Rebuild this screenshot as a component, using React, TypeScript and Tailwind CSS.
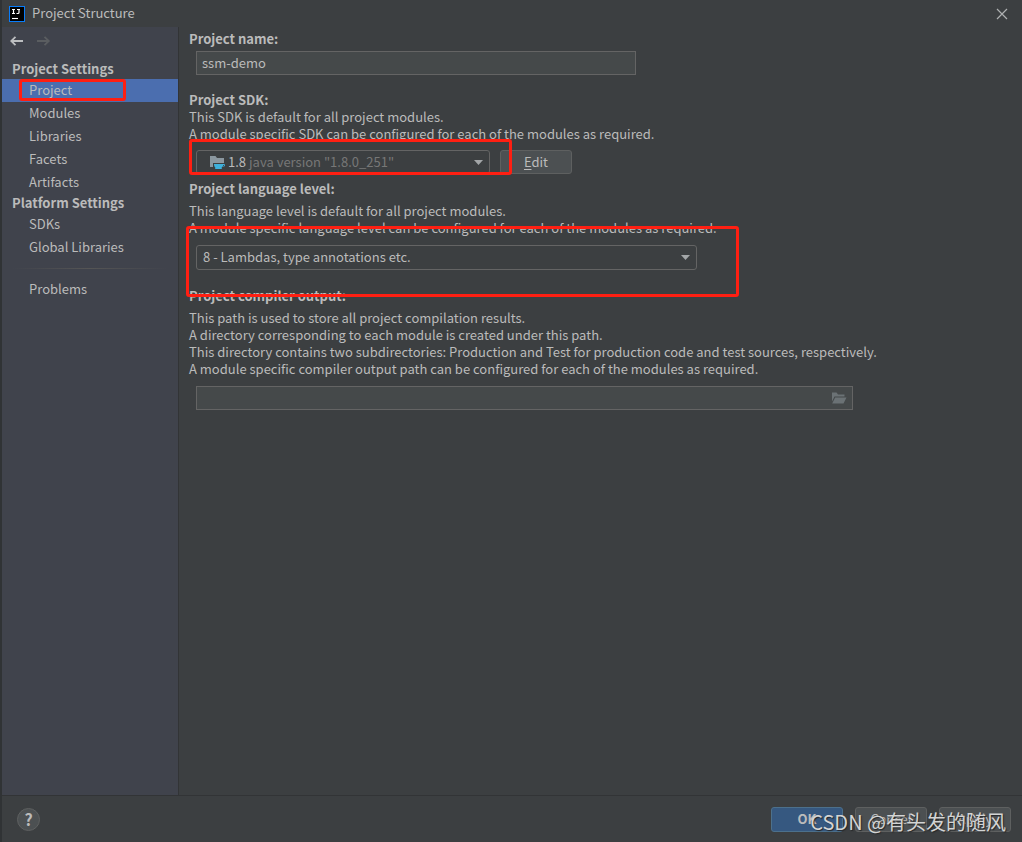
import { ReactNode, useState } from "react";

const settingsGroups = [
  { title: "Project Settings", items: ["Project", "Modules", "Libraries", "Facets", "Artifacts"] },
  { title: "Platform Settings", items: ["SDKs", "Global Libraries"] },
];

function Logo() {
  return (
    <svg width="16" height="16" viewBox="0 0 16 16" aria-hidden="true">
      <rect width="16" height="16" fill="#087cfa" />
      <rect x="1" y="1" width="14" height="14" fill="#000" />
      <path d="M3 3.500h3M4.500 3.500v4M3 7.500h3M8 3.500h3M10 3.500v3q0 1-1 1h-1.500" fill="none" stroke="#fff" strokeWidth="1.200" />
      <path d="M3 12.500h6" stroke="#fff" strokeWidth="1.100" />
    </svg>
  );
}

function Arrow({ back = false }: { back?: boolean }) {
  return (
    <svg width="14" height="10" viewBox="0 0 14 10" fill="none" stroke="currentColor" strokeWidth="1.800" aria-hidden="true">
      {back ? <path d="M13 5H1M5.500 .8L1.200 5l4.300 4.200" /> : <path d="M0 5h12M7.500 .8L11.800 5 7.500 9.200" />}
    </svg>
  );
}

function Caret() {
  return (
    <svg width="10" height="6" viewBox="0 0 10 6" className="pointer-events-none absolute right-1.5 top-[10px]" aria-hidden="true">
      <path d="M0 0h9L4.500 5z" fill="#a3a6a8" />
    </svg>
  );
}

function JdkIcon() {
  return (
    <svg width="16" height="16" viewBox="0 0 16 16" aria-hidden="true">
      <path d="M1 2h5.500l1.500 2h7v5H4v4H1z" fill="#8b979f" />
      <path d="M5 10h9.500c1 0 1.500.500 1.500 1.300s-.6 1.300-1.600 1.300h-.9c-.3.700-.8 1.200-1.500 1.600h1v.8H6v-.8h1C5.600 13.300 5 12 5 10zm9 1v.9c.8 0 1.200-.2 1.200-.5S14.800 11 14 11z" fill="#3fb1dc" />
    </svg>
  );
}

function FolderIcon() {
  return (
    <svg width="16" height="12" viewBox="0 0 16 12" aria-hidden="true">
      <path d="M1 .5h4.500l1.500 2h6.500v2H3.500L1 9.500z" fill="#6b7275" />
      <path d="M4.200 5.500H15.500L12.500 11.500H1.200z" fill="#6b7275" />
    </svg>
  );
}

function NavItem({ label, active, onSelect }: { label: string; active: boolean; onSelect: () => void }) {
  return (
    <button
      type="button"
      onClick={onSelect}
      aria-current={active ? "page" : undefined}
      className={`relative block h-[23px] w-full pb-0.5 pl-[27px] text-left outline-none ${active ? "bg-[#4b6eaf]" : ""}`}
    >
      {label}
      {label === "Project" && (
        <span className="pointer-events-none absolute left-[17px] top-0 h-[22px] w-[107px] rounded-[3px] border-[3px] border-[#ff1f12]" />
      )}
    </button>
  );
}

function Heading({ children, htmlFor }: { children: ReactNode; htmlFor: string }) {
  return (
    <label htmlFor={htmlFor} className="block font-bold">
      {children}
    </label>
  );
}

export default function App() {
  const [page, setPage] = useState("Project");
  const dialogButton = "h-[25px] w-[72px] rounded-[3px] border border-[#5e6060] bg-[#4c5052] pb-0.5";

  return (
    <div className="relative flex min-h-screen flex-col border-l-2 border-[#303335] bg-[#3c3f41] font-['Noto_Sans_CJK_SC',sans-serif] text-[13px] leading-[17px] text-[#bbbbbb]">
      <header className="flex h-[27px] items-center pl-[7px] pr-[14px]">
        <Logo />
        <h1 className="ml-[7px] flex-1 pb-0.5">Project Structure</h1>
        <button type="button" aria-label="Close">
          <svg width="12" height="12" viewBox="0 0 12 12" stroke="#aeb0b1" strokeWidth="1.200" aria-hidden="true">
            <path d="M1 1l10 10M11 1L1 11" />
          </svg>
        </button>
      </header>

      <div className="flex flex-1">
        <nav className="w-[177px] shrink-0 border-r border-[#323436] bg-[#40434c]">
          <div className="flex h-[33px] items-start gap-[13px] pl-2 pt-[9px]">
            <button type="button" aria-label="Back" className="text-[#bcbec0]">
              <Arrow back />
            </button>
            <button type="button" aria-label="Forward" disabled className="text-[#5a5d60]">
              <Arrow />
            </button>
          </div>
          {settingsGroups.map((group) => (
            <section key={group.title}>
              <h2 className="h-[19px] pl-2.5 font-bold">{group.title}</h2>
              {group.items.map((item) => (
                <NavItem key={item} label={item} active={page === item} onSelect={() => setPage(item)} />
              ))}
            </section>
          ))}
          <hr className="mx-2.5 my-[9px] h-px border-0 bg-linear-to-r from-transparent via-[#555555] to-transparent" />
          <NavItem label="Problems" active={page === "Problems"} onSelect={() => setPage("Problems")} />
        </nav>

        <main className="min-w-0 flex-1 pl-2.5 pr-4 pt-[3px]">
          <section>
            <Heading htmlFor="name">Project name:</Heading>
            <input
              id="name"
              defaultValue="ssm-demo"
              className="ml-[7px] mt-1 block h-[24px] w-full max-w-[440px] border border-[#646464] bg-[#45494a] px-[5px] pb-0.5 outline-none"
            />
          </section>

          <section className="mt-4">
            <Heading htmlFor="sdk">Project SDK:</Heading>
            <p>This SDK is default for all project modules.</p>
            <p>A module specific SDK can be configured for each of the modules as required.</p>
            <div className="relative ml-[7px] mt-2 flex gap-[10px]">
              <div className="relative h-[24px] w-[294px]">
                <select id="sdk" className="h-full w-full appearance-none rounded-[3px] border border-[#646464] bg-[#3c3f41] text-transparent outline-none">
                  <option>1.8 java version "1.8.0_251"</option>
                </select>
                <span aria-hidden="true" className="pointer-events-none absolute inset-y-0 left-[13px] flex items-center gap-[3px]">
                  <JdkIcon />
                  <span className="pb-0.5">1.8</span>
                  <span className="pb-0.5 text-[#777777]">java version "1.8.0_251"</span>
                </span>
                <Caret />
              </div>
              <button type="button" className="h-[24px] w-[72px] rounded-[3px] border border-[#5e6060] bg-[#4c5052] pb-0.5">
                <span className="underline underline-offset-2">E</span>dit
              </button>
              <div className="pointer-events-none absolute -left-[7px] -top-[11px] h-[36px] w-[323px] rounded-[3px] border-[3px] border-[#ff1f12]" />
            </div>
          </section>

          <section className="mt-1.5">
            <Heading htmlFor="level">Project language level:</Heading>
            <p className="mt-[5px]">This language level is default for all project modules.</p>
            <p>A module specific language level can be configured for each of the modules as required.</p>
            <div className="relative ml-[7px] mt-[9px] h-[25px] w-[501px]">
              <select id="level" className="h-full w-full appearance-none rounded-[3px] border border-[#646464] bg-[#3c3f41] px-1.5 pb-0.5 outline-none">
                <option>8 - Lambdas, type annotations etc.</option>
              </select>
              <Caret />
              <div className="pointer-events-none absolute -left-[10px] -top-[19px] h-[71px] w-[553px] rounded-[3px] border-[3px] border-[#ff1f12]" />
            </div>
          </section>

          <section className="mt-[17px]">
            <Heading htmlFor="output">Project compiler output:</Heading>
            <p className="mt-[5px]">This path is used to store all project compilation results.</p>
            <p>A directory corresponding to each module is created under this path.</p>
            <p>This directory contains two subdirectories: Production and Test for production code and test sources, respectively.</p>
            <p>A module specific compiler output path can be configured for each of the modules as required.</p>
            <div className="ml-[7px] mt-[9px] flex h-[24px] max-w-[657px] items-center border border-[#646464] bg-[#45494a] pr-[5px]">
              <input id="output" className="h-full min-w-0 flex-1 bg-transparent px-[5px] outline-none" />
              <button type="button" aria-label="Browse">
                <FolderIcon />
              </button>
            </div>
          </section>
        </main>
      </div>

      <footer className="relative flex h-[47px] items-center gap-[12px] border-t border-[#323436] pl-[15px] pr-[11px]">
        <button type="button" aria-label="Help" className="mr-auto h-[23px] w-[23px] rounded-full border border-[#5e6060] bg-[#4c5052] text-base font-bold leading-[21px]">
          ?
        </button>
        <button type="button" className="h-[25px] w-[72px] rounded-[3px] border border-[#4c708c] bg-[#365880] pb-0.5 font-bold">OK</button>
        <button type="button" className={dialogButton}>Cancel</button>
        <button type="button" className={dialogButton}>Apply</button>
        <span className="pointer-events-none absolute right-[16px] top-[13px] whitespace-nowrap text-[20px] leading-[26px] text-[#d3d4d4] [text-shadow:1px_1px_1px_#252729]">
          CSDN @有头发的随风
        </span>
      </footer>
    </div>
  );
}
